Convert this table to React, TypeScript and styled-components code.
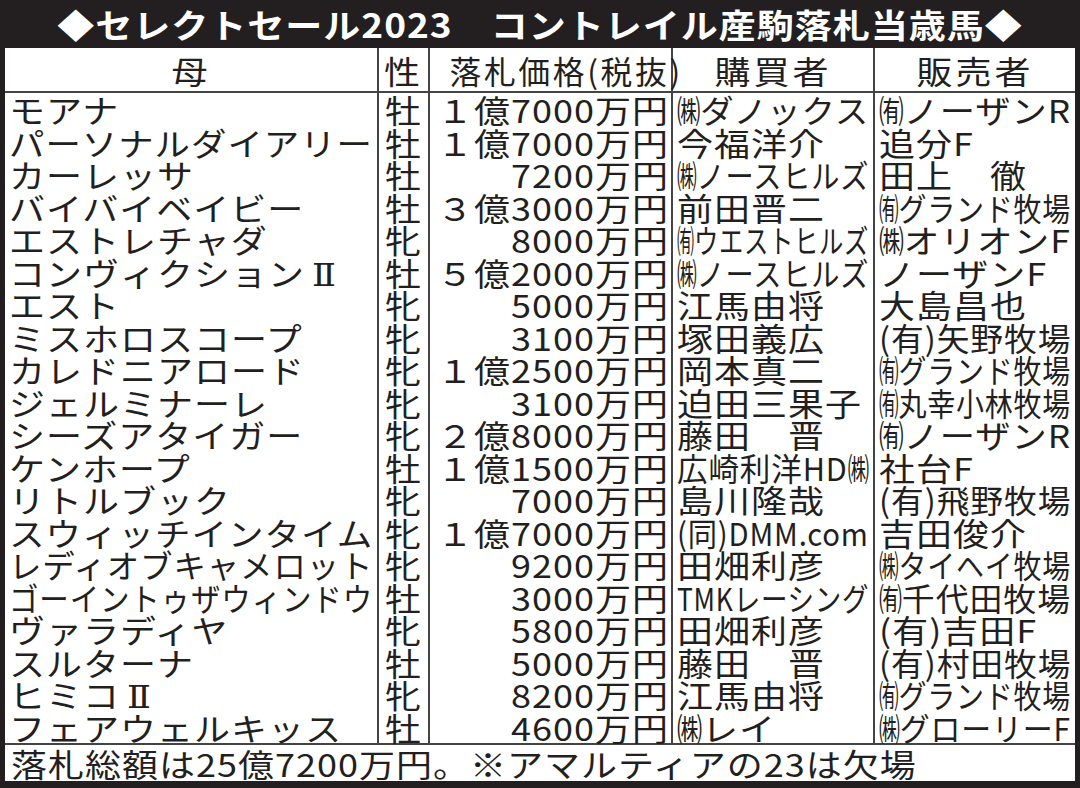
import React, { useLayoutEffect, useRef, useState } from 'react'
import styled, { createGlobalStyle } from 'styled-components'

const ink = '#231f20'
const rule = '#444'
const FONT = '"Noto Sans CJK JP", "Noto Sans", sans-serif'
const COLUMNS = '372px 51px 243px 202px 202px'
// the paper sets its type flattened (平体): squeeze every line vertically
const FLAT = 0.88

const GlobalStyle = createGlobalStyle`
  *, *::before, *::after { box-sizing: border-box; }
  html, body { margin: 0; padding: 0; background: #fff; }
  body { font-family: ${FONT}; color: ${ink}; }
`

const Frame = styled.div`
  width: 1080px;
  height: 788px;
  overflow: hidden;
  background: ${ink};
  padding: 0 5px 7px 5px;
  display: flex;
  flex-direction: column;
`
const Title = styled.h1`
  margin: 0;
  flex: 0 0 48px;
  display: flex;
  align-items: center;
  justify-content: center;
  color: #fff;
  font-size: 37px;
  font-weight: 700;
  letter-spacing: 1px;
  line-height: 1;
  white-space: nowrap;
  span {
    display: inline-block;
    transform: scaleY(0.9);
  }
`
const Sheet = styled.div`
  flex: 1;
  min-height: 0;
  background: #fff;
  display: flex;
  flex-direction: column;
  font-size: 36px;
  letter-spacing: 1px;
  line-height: 1;
`
const HeadRow = styled.div`
  flex: 0 0 45px;
  display: grid;
  grid-template-columns: ${COLUMNS};
  border-bottom: 2px solid ${rule};
  letter-spacing: 3px;
`
const Body = styled.div`
  flex: 1;
  min-height: 0;
  display: grid;
  grid-template-rows: repeat(20, minmax(0, 1fr));
`
const Row = styled.div`
  display: grid;
  grid-template-columns: ${COLUMNS};
  min-height: 0;
`
type Align = 'left' | 'center' | 'right'

const Cell = styled.div<{ $align: Align; $divider?: boolean }>`
  display: flex;
  align-items: center;
  min-width: 0;
  min-height: 0;
  padding: 0 ${(p) => (p.$align === 'right' ? '2px' : '4px')};
  border-left: ${(p) => (p.$divider ? `2px solid ${rule}` : '0')};
`
const FitBox = styled.span<{ $align: Align }>`
  display: block;
  width: 100%;
  height: 32px;
  line-height: 32px;
  white-space: nowrap;
  text-align: ${(p) => p.$align};
`
const FitText = styled.span<{ $align: Align }>`
  display: inline-block;
  vertical-align: top;
  transform-origin: ${(p) => (p.$align === 'center' ? 'center' : p.$align)} center;
`
const Mark = styled.span`
  display: inline-block;
  vertical-align: top;
  width: 25px;
  letter-spacing: 0;
  transform: scaleX(0.7);
  transform-origin: left center;
`
const Roman = styled.span`
  font-family: 'DejaVu Serif', 'Liberation Serif', ${FONT};
  font-size: 0.98em;
  font-weight: 300;
  margin-left: 0.2em;
  line-height: 0;
`
const Footer = styled.div`
  flex: 0 0 38px;
  border-top: 2px solid ${rule};
  display: flex;
  align-items: center;
  padding: 0 6px;
`

const typeset = (text: string) =>
  text
    .split(/([㈱㈲Ⅱ])/)
    .filter(Boolean)
    .map((part, i) => {
      if (part === '㈱' || part === '㈲') return <Mark key={i}>{part}</Mark>
      if (part === 'Ⅱ') return <Roman key={i}>{part}</Roman>
      return <React.Fragment key={i}>{part}</React.Fragment>
    })

// squeezes a line sideways (長体) when it would not fit its cell
const Fit = ({ text, align }: { text: string; align: Align }) => {
  const boxRef = useRef<HTMLSpanElement>(null)
  const textRef = useRef<HTMLSpanElement>(null)
  const [sx, setSx] = useState(1)

  useLayoutEffect(() => {
    const measure = () => {
      const box = boxRef.current
      const line = textRef.current
      if (!box || !line) return
      const avail = box.clientWidth
      const natural = line.offsetWidth
      setSx(natural > avail ? avail / natural : 1)
    }
    measure()
    document.fonts?.ready.then(measure)
  }, [text])

  return (
    <FitBox ref={boxRef} $align={align}>
      <FitText ref={textRef} $align={align} style={{ transform: `scale(${sx}, ${FLAT})` }}>
        {typeset(text)}
      </FitText>
    </FitBox>
  )
}

type Lot = [dam: string, sex: string, price: string, buyer: string, seller: string]

const LOTS: Lot[] = [
  ['モアナ', '牡', '１億7000万円', '㈱ダノックス', '㈲ノーザンR'],
  ['パーソナルダイアリー', '牡', '１億7000万円', '今福洋介', '追分F'],
  ['カーレッサ', '牡', '7200万円', '㈱ノースヒルズ', '田上　徹'],
  ['バイバイベイビー', '牡', '３億3000万円', '前田晋二', '㈲グランド牧場'],
  ['エストレチャダ', '牝', '8000万円', '㈲ウエストヒルズ', '㈱オリオンF'],
  ['コンヴィクションⅡ', '牡', '５億2000万円', '㈱ノースヒルズ', 'ノーザンF'],
  ['エスト', '牝', '5000万円', '江馬由将', '大島昌也'],
  ['ミスホロスコープ', '牝', '3100万円', '塚田義広', '(有)矢野牧場'],
  ['カレドニアロード', '牝', '１億2500万円', '岡本真二', '㈲グランド牧場'],
  ['ジェルミナーレ', '牝', '3100万円', '迫田三果子', '㈲丸幸小林牧場'],
  ['シーズアタイガー', '牝', '２億8000万円', '藤田　晋', '㈲ノーザンR'],
  ['ケンホープ', '牡', '１億1500万円', '広崎利洋HD㈱', '社台F'],
  ['リトルブック', '牝', '7000万円', '島川隆哉', '(有)飛野牧場'],
  ['スウィッチインタイム', '牝', '１億7000万円', '(同)DMM.com', '吉田俊介'],
  ['レディオブキャメロット', '牝', '9200万円', '田畑利彦', '㈱タイヘイ牧場'],
  ['ゴーイントゥザウィンドウ', '牡', '3000万円', 'TMKレーシング', '㈲千代田牧場'],
  ['ヴァラディヤ', '牝', '5800万円', '田畑利彦', '(有)吉田F'],
  ['スルターナ', '牡', '5000万円', '藤田　晋', '(有)村田牧場'],
  ['ヒミコⅡ', '牝', '8200万円', '江馬由将', '㈲グランド牧場'],
  ['フェアウェルキッス', '牡', '4600万円', '㈱レイ', '㈱グローリーF'],
]

const ALIGNS: Align[] = ['left', 'center', 'right', 'left', 'left']
const HEADINGS = ['母', '性', '落札価格(税抜)', '購買者', '販売者']

const App = () => (
  <>
    <GlobalStyle />
    <Frame>
      <Title>
        <span>◆セレクトセール2023　コントレイル産駒落札当歳馬◆</span>
      </Title>
      <Sheet>
        <HeadRow>
          {HEADINGS.map((heading, i) => (
            <Cell key={heading} $align='center' $divider={i > 0}>
              <Fit text={heading} align='center' />
            </Cell>
          ))}
        </HeadRow>
        <Body>
          {LOTS.map((lot) => (
            <Row key={lot[0]}>
              {lot.map((value, i) => (
                <Cell key={i} $align={ALIGNS[i]} $divider={i > 0}>
                  <Fit text={value} align={ALIGNS[i]} />
                </Cell>
              ))}
            </Row>
          ))}
        </Body>
        <Footer>
          <Fit text='落札総額は25億7200万円。※アマルティアの23は欠場' align='left' />
        </Footer>
      </Sheet>
    </Frame>
  </>
)

export default App
